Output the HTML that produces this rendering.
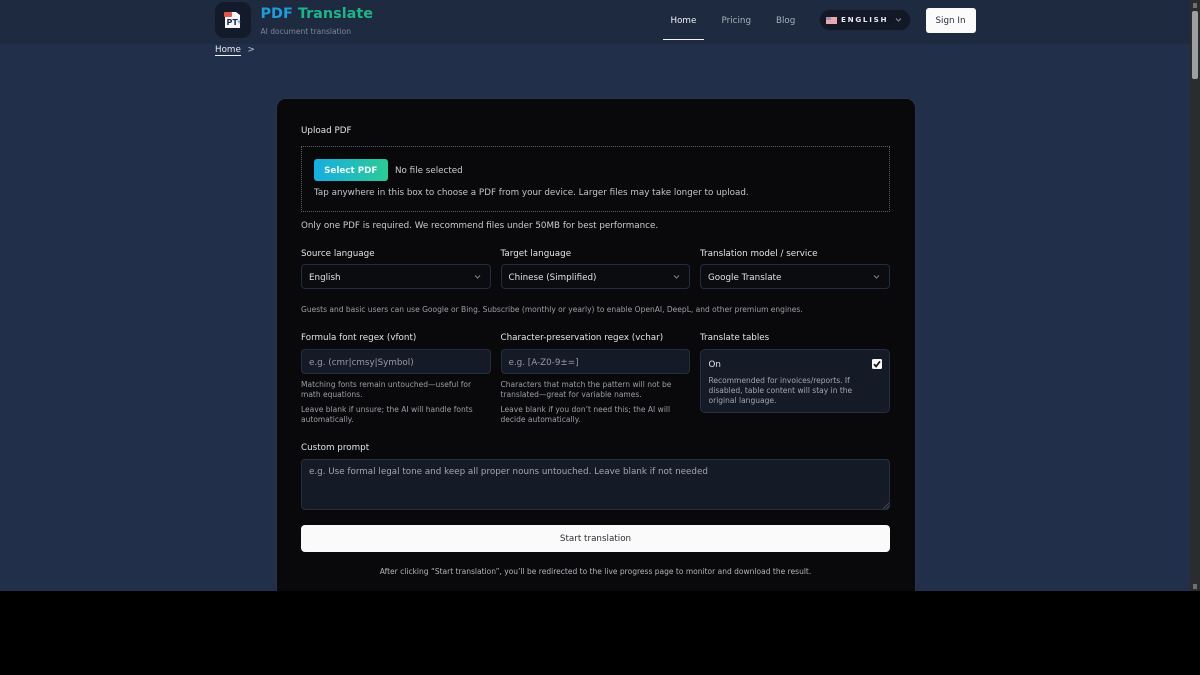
<!DOCTYPE html>
<html lang="en"><head><meta charset="utf-8"><title>PDF Translate</title>
<style>
*{box-sizing:border-box;margin:0;padding:0}
html,body{width:1200px;height:675px;overflow:hidden;background:#000}
body{font-family:"DejaVu Sans","Liberation Sans",sans-serif;position:relative}
#page{position:absolute;left:0;top:0;width:1200px;height:591px;overflow:hidden;background:#212f4a}
.a{position:absolute;white-space:nowrap}
.lab{font-size:8.75px;color:#e2e4e8;line-height:12px}
.hint{font-size:7.52px;color:#9b9fa6;line-height:10px}
.box{position:absolute;border:1px solid #222d42;border-radius:4px}
.sel{background:#0b0c10;height:25px;top:264px;font-size:8.75px;color:#dfe2e6;line-height:26.5px;padding-left:7px}
.sel svg{position:absolute;right:9px;top:8.500px}
.inp{background:#151a27;height:25px;top:349px;font-size:8.75px;color:#979ba3;line-height:26.5px;padding-left:7px}
</style></head><body>
<div id="page">
<div class="a" style="left:0;top:0;width:1200px;height:44px;background:#1e2a3f"></div>
<div class="a" style="left:215px;top:2px;width:36px;height:36px;border-radius:9px;background:#131a2a"></div>
<svg class="a" style="left:223px;top:9px" width="20" height="21" viewBox="0 0 20 21"><path d="M2 3h11l4 3v13H2z" fill="#f4f5f7"/><rect x="1" y="3" width="8" height="5" rx="1" fill="#e2574c"/><text x="3.500" y="16" font-family="DejaVu Sans" font-weight="700" font-size="8" fill="#1d2a44">PT</text><text x="14" y="14.500" font-family="DejaVu Sans" font-weight="700" font-size="5" fill="#2a7fc4">+</text></svg>
<div class="a" style="left:260.500px;top:3.500px;font-size:14.400px;font-weight:700;line-height:20px"><span style="color:#1f9bd8">PDF</span> <span style="color:#1fb38a">Translate</span></div>
<div class="a" style="left:260.500px;top:25.500px;font-size:7.520px;line-height:12px;color:#7d8798">AI document translation</div>
<div class="a" style="left:670.500px;top:14.500px;font-size:8.750px;line-height:12px;color:#eef0f3">Home</div>
<div class="a" style="left:663px;top:38.500px;width:41px;height:1.500px;background:#f4f5f7"></div>
<div class="a" style="left:721.500px;top:14.500px;font-size:8.750px;line-height:12px;color:#a8b0bd">Pricing</div>
<div class="a" style="left:776px;top:14.500px;font-size:8.750px;line-height:12px;color:#a8b0bd">Blog</div>
<div class="a" style="left:819px;top:9px;width:92px;height:22px;border-radius:11px;background:#131827;border:1px solid #1e2638"></div>
<div class="a" style="left:826px;top:16.500px;width:10.500px;height:7px;background:#e8a8ae"><div style="width:5px;height:3.500px;background:#a98fb0"></div></div>
<div class="a" style="left:841px;top:14px;font-size:7.200px;line-height:12px;font-weight:700;letter-spacing:1.700px;color:#e9ebef">ENGLISH</div>
<svg class="a" style="left:895px;top:17px" width="7" height="6" viewBox="0 0 7 6"><path d="M1 1.500l2.500 2.500L6 1.500" fill="none" stroke="#8d94a1" stroke-width="1"/></svg>
<div class="a" style="left:925.500px;top:7.500px;width:50px;height:25px;border-radius:3px;background:#fbfbfb;color:#26303f;font-size:8.750px;line-height:26px;text-align:center">Sign In</div>

<div class="a" style="left:215px;top:43.500px;font-size:8.750px;line-height:12px;color:#e6e8ec">Home</div>
<div class="a" style="left:215px;top:54.500px;width:26px;height:1px;background:#eef0f3"></div>
<div class="a" style="left:247.500px;top:43.500px;font-size:8.750px;line-height:12px;color:#c3c7ce">&gt;</div>

<div class="a" style="left:275.500px;top:97.500px;width:640px;height:520px;border-radius:10px;background:#09090b;border:1px solid #2a3347"></div>

<div class="a lab" style="left:301px;top:125px">Upload PDF</div>
<div class="a" style="left:301px;top:146px;width:589px;height:66px;border:1px dotted #5a5d64"></div>
<div class="a" style="left:314px;top:159px;width:73.500px;height:22px;border-radius:3px;background:linear-gradient(90deg,#16aee2,#2cca95);color:#f1fbf9;font-size:8.750px;font-weight:700;line-height:24.500px;text-align:center">Select PDF</div>
<div class="a lab" style="left:395px;top:165px;color:#c9ccd2">No file selected</div>
<div class="a lab" style="left:314px;top:187px;color:#c2c5cb">Tap anywhere in this box to choose a PDF from your device. Larger files may take longer to upload.</div>
<div class="a lab" style="left:301px;top:220px;color:#c9ccd2">Only one PDF is required. We recommend files under 50MB for best performance.</div>

<div class="a lab" style="left:301px;top:248px">Source language</div>
<div class="a lab" style="left:500.500px;top:248px">Target language</div>
<div class="a lab" style="left:700px;top:248px">Translation model / service</div>
<div class="box sel" style="left:301px;width:189.500px">English<svg width="7" height="6" viewBox="0 0 7 6"><path d="M1 1.500l2.500 2.500L6 1.500" fill="none" stroke="#7c818a" stroke-width="1"/></svg></div>
<div class="box sel" style="left:500.500px;width:189.500px">Chinese (Simplified)<svg width="7" height="6" viewBox="0 0 7 6"><path d="M1 1.500l2.500 2.500L6 1.500" fill="none" stroke="#7c818a" stroke-width="1"/></svg></div>
<div class="box sel" style="left:700px;width:190px">Google Translate<svg width="7" height="6" viewBox="0 0 7 6"><path d="M1 1.500l2.500 2.500L6 1.500" fill="none" stroke="#7c818a" stroke-width="1"/></svg></div>
<div class="a hint" style="left:301px;top:304.500px">Guests and basic users can use Google or Bing. Subscribe (monthly or yearly) to enable OpenAI, DeepL, and other premium engines.</div>

<div class="a lab" style="left:301px;top:332px">Formula font regex (vfont)</div>
<div class="a lab" style="left:500.500px;top:332px">Character-preservation regex (vchar)</div>
<div class="a lab" style="left:700px;top:332px">Translate tables</div>
<div class="box inp" style="left:301px;width:189.500px">e.g. (cmr|cmsy|Symbol)</div>
<div class="box inp" style="left:500.500px;width:189.500px">e.g. [A-Z0-9±=]</div>
<div class="a hint" style="left:301px;top:379.500px">Matching fonts remain untouched—useful for<br>math equations.</div>
<div class="a hint" style="left:301px;top:405px">Leave blank if unsure; the AI will handle fonts<br>automatically.</div>
<div class="a hint" style="left:500.500px;top:379.500px">Characters that match the pattern will not be<br>translated—great for variable names.</div>
<div class="a hint" style="left:500.500px;top:405px">Leave blank if you don’t need this; the AI will<br>decide automatically.</div>

<div class="box" style="left:700px;top:349px;width:190px;height:64px;background:#151a27;border-color:#262e40;border-radius:5px"></div>
<div class="a lab" style="left:708.500px;top:359px">On</div>
<div class="a" style="left:872px;top:358.500px;width:10px;height:10px;border-radius:1.500px;background:#fafafa"></div>
<svg class="a" style="left:872px;top:358.500px" width="10" height="10" viewBox="0 0 10 10"><path d="M2 5.200l2.100 2.200L8 2.400" fill="none" stroke="#111" stroke-width="1.700"/></svg>
<div class="a hint" style="left:708.500px;top:375.500px;color:#a3a7ae">Recommended for invoices/reports. If<br>disabled, table content will stay in the<br>original language.</div>

<div class="a lab" style="left:301px;top:442px">Custom prompt</div>
<div class="box" style="left:301px;top:459px;width:589px;height:51px;background:#151a27;border-color:#262e40"></div>
<svg class="a" style="left:883px;top:503px" width="6" height="6" viewBox="0 0 6 6"><path d="M0 6L6 0M3 6L6 3" stroke="#555a63" stroke-width=".7"/></svg>
<div class="a lab" style="left:301px;top:465.500px;padding-left:8px;color:#a2a6ad">e.g. Use formal legal tone and keep all proper nouns untouched. Leave blank if not needed</div>
<div class="a" style="left:301px;top:524.500px;width:589px;height:27.500px;border-radius:4px;background:#fafafa;color:#2b2f36;font-size:8.750px;line-height:28px;text-align:center">Start translation</div>
<div class="a hint" style="left:301px;width:589px;top:566.500px;text-align:center;color:#b2b5bb;white-space:nowrap">After clicking “Start translation”, you’ll be redirected to the live progress page to monitor and download the result.</div>

<div class="a" style="left:1190px;top:0;width:10px;height:591px;background:#2a2c30"></div>
<div class="a" style="left:1192px;top:11px;width:6px;height:68px;border-radius:2px;background:#9d9fa2"></div>
<div class="a" style="left:1192.500px;top:3px;width:4px;height:5px;background:#6e7074"></div>
<div class="a" style="left:1192.500px;top:584px;width:4px;height:5px;background:#6e7074"></div>
</div>
</body></html>
